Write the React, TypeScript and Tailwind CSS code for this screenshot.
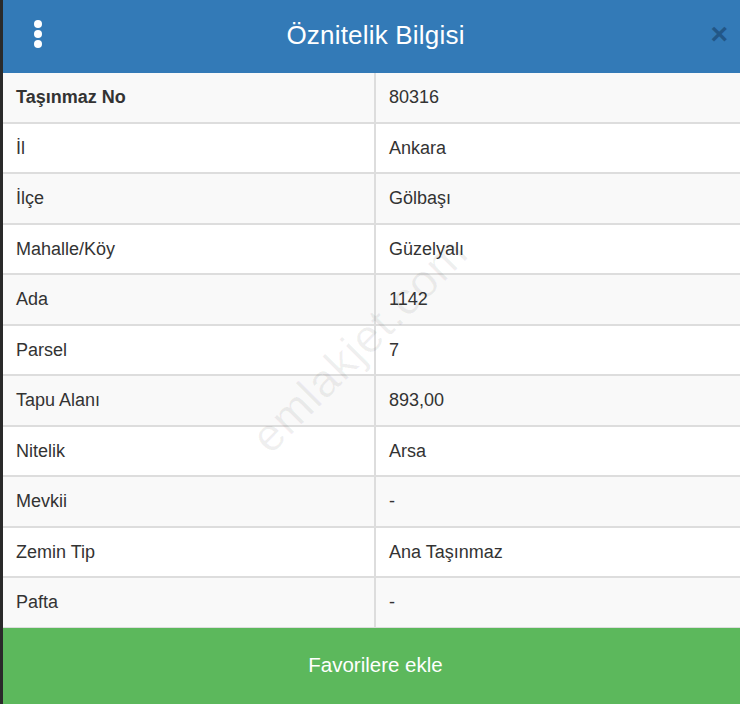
const ROWS: [string, string][] = [
  ['Taşınmaz No', '80316'],
  ['İl', 'Ankara'],
  ['İlçe', 'Gölbaşı'],
  ['Mahalle/Köy', 'Güzelyalı'],
  ['Ada', '1142'],
  ['Parsel', '7'],
  ['Tapu Alanı', '893,00'],
  ['Nitelik', 'Arsa'],
  ['Mevkii', '-'],
  ['Zemin Tip', 'Ana Taşınmaz'],
  ['Pafta', '-'],
]

export default function App() {
  return (
    <div
      className="w-[740px] h-[704px] bg-[#2a2a2a] pl-[3px] overflow-hidden"
      style={{ fontFamily: '"Liberation Sans", Arial, sans-serif' }}
    >
      <div className="relative flex flex-col h-full bg-white">
        {/* Header */}
        <div className="relative flex items-center justify-center h-[73px] bg-[#337ab7] shrink-0">
          <div className="absolute left-[31px] top-[20px] flex flex-col gap-[2px]">
            <span className="w-[8px] h-[8px] rounded-full bg-white" />
            <span className="w-[8px] h-[8px] rounded-full bg-white" />
            <span className="w-[8px] h-[8px] rounded-full bg-white" />
          </div>
          <h1 className="ml-[8px] text-[26px] text-white leading-none -mt-[3px] tracking-[0.2px]">Öznitelik Bilgisi</h1>
          <span className="absolute right-[12px] top-[19px] text-[30px] font-bold leading-none text-[#1f4f7c] opacity-80">×</span>
        </div>

        {/* Table */}
        <div className="flex flex-col">
          {ROWS.map(([k, v], i) => (
            <div
              key={k}
              className={`flex h-[50.5px] border-b-2 border-[#ddd] text-[18px] text-[#333] ${i % 2 === 0 ? 'bg-[#f9f9f9]' : 'bg-white'}`}
            >
              <div className={`w-[373px] flex items-center pl-[13px] pt-[1px] border-r-2 border-[#ddd] ${i === 0 ? 'font-bold' : ''}`}>
                {k}
              </div>
              <div className="flex-1 flex items-center pl-[13px] pt-[1px]">{v}</div>
            </div>
          ))}
        </div>

        {/* Watermark */}
        <div className="absolute left-[215px] top-[310px] -rotate-45 text-[46px] text-[#000]/[0.06] pointer-events-none select-none tracking-[1px]">
          emlakjet.com
        </div>

        {/* Button */}
        <button className="flex-1 flex items-center justify-center bg-[#5cb85c] text-white text-[20.5px] -mt-px">
          <span className="ml-[8px]">Favorilere ekle</span>
        </button>
      </div>
    </div>
  )
}
